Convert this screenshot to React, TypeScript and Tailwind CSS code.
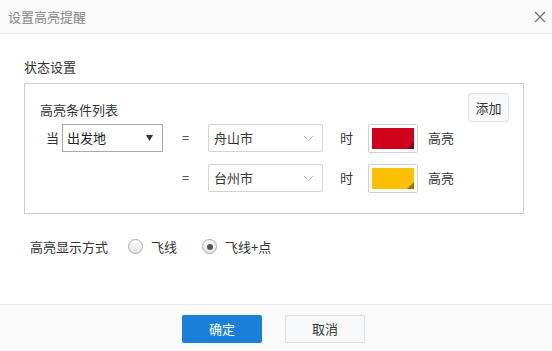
import { useState } from "react";

function Chevron() {
  return (
    <svg width="11" height="7" viewBox="0 0 11 7" fill="none">
      <path d="M1 1l4.5 4.5L10 1" stroke="#b8b8b8" strokeWidth="1" />
    </svg>
  );
}

function Swatch({ color }: { color: string }) {
  return (
    <div className="h-[29px] w-[50px] rounded-[2px] border border-[#cfcfcf] bg-white p-[3px]">
      <div className="relative h-full w-full overflow-hidden" style={{ background: color }}>
        <div className="absolute bottom-0 right-0 h-0 w-0 border-b-[7px] border-l-[7px] border-b-black/40 border-l-transparent" />
      </div>
    </div>
  );
}

function CityRow({ first, city, color }: { first?: boolean; city: string; color: string }) {
  return (
    <div className="flex h-[28px] items-center">
      <span className="w-[22px] pl-[6px] text-[13px]">{first ? "当" : ""}</span>
      {first ? (
        <div className="flex h-[28px] w-[101px] items-center justify-between border border-[#a9a9a9] bg-white pl-[4px] pr-[9px] text-[13px] text-[#222]">
          <span>出发地</span>
          <svg width="7" height="6" viewBox="0 0 7 6">
            <path d="M0 0h7L3.5 6z" fill="#333" />
          </svg>
        </div>
      ) : (
        <div className="w-[101px]" />
      )}
      <span className="w-[45px] pl-[19px] text-[13px]">=</span>
      <div className="flex h-[28px] w-[115px] items-center justify-between rounded-[2px] border border-[#d4d4d4] bg-white pl-[5px] pr-[8px] text-[13px] text-[#333]">
        <span>{city}</span>
        <Chevron />
      </div>
      <span className="w-[45px] pl-[17px] text-[13px]">时</span>
      <Swatch color={color} />
      <span className="pl-[10px] text-[13px]">高亮</span>
    </div>
  );
}

function Radio({ on }: { on: boolean }) {
  return (
    <span className="flex h-[15px] w-[15px] items-center justify-center rounded-full border border-[#aaa] bg-gradient-to-b from-[#fff] to-[#e4e4e4]">
      {on && <span className="h-[6px] w-[6px] rounded-full bg-[#555]" />}
    </span>
  );
}

export default function App() {
  const [mode, setMode] = useState("dot");
  return (
    <div
      className="flex h-[351px] w-[552px] flex-col bg-white text-[#333]"
      style={{ fontFamily: '"Noto Sans CJK SC", "Noto Sans", sans-serif' }}
    >
      <div className="flex h-[34px] items-center justify-between border-b border-[#e8e8e8] bg-[#fafafa] pl-[8px] pr-[6px]">
        <span className="text-[13px] text-[#888]">设置高亮提醒</span>
        <svg width="12" height="12" viewBox="0 0 12 12">
          <path d="M1 1l10 10M11 1L1 11" stroke="#777" strokeWidth="1.4" />
        </svg>
      </div>

      <div className="flex-1 px-[24px] pt-[24px]">
        <div className="h-[18px] text-[13px] leading-[18px]">状态设置</div>
        <div className="mt-[7px] h-[131px] w-[500px] border border-[#cfcfcf] px-[15px] pt-[9px]">
          <div className="flex items-start justify-between">
            <span className="mt-[7px] text-[13px]">高亮条件列表</span>
            <button className="mr-[-1px] h-[29px] w-[41px] rounded-[3px] border border-[#e3e3e3] bg-[#f7f8fa] text-[13px] text-[#333]">
              添加
            </button>
          </div>
          <div className="mt-[2px] flex flex-col gap-[12px]">
            <CityRow first city="舟山市" color="#d0021b" />
            <CityRow city="台州市" color="#fcc000" />
          </div>
        </div>

        <div className="mt-[23px] flex items-center pl-[6px] text-[13px]">
          <span className="mr-[20px]">高亮显示方式</span>
          <label className="mr-[25px] flex items-center gap-[8px]" onClick={() => setMode("line")}>
            <Radio on={mode === "line"} />
            飞线
          </label>
          <label className="flex items-center gap-[8px]" onClick={() => setMode("dot")}>
            <Radio on={mode === "dot"} />
            飞线+点
          </label>
        </div>
      </div>

      <div className="flex h-[47px] items-start justify-center gap-[23px] border-t border-[#ebebeb] bg-[#fafafa] pr-[5px] pt-[10px]">
        <button className="h-[28px] w-[80px] rounded-[2px] bg-[#1a7fd9] text-[13px] text-white">确定</button>
        <button className="h-[28px] w-[80px] rounded-[2px] border border-[#e0e0e0] bg-[#f7f8fa] text-[13px] text-[#333]">
          取消
        </button>
      </div>
    </div>
  );
}
